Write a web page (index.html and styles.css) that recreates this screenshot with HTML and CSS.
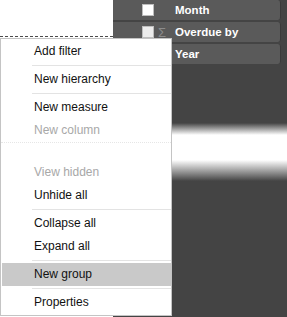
FILE: index.html
```html
<!DOCTYPE html>
<html lang="en">
<head>
    <meta charset="UTF-8">
    <title>Fields context menu</title>
    <link rel="stylesheet" href="styles.css">
</head>
<body>
    <div class="screen">
        <div class="corner"></div>
        <div class="panel">
            <div class="field"><span class="check"></span><span class="sigma"></span><span class="name">Month</span></div>
            <div class="field"><span class="check dim"></span><span class="sigma">&Sigma;</span><span class="name">Overdue by</span></div>
            <div class="field"><span class="check"></span><span class="sigma"></span><span class="name">Year</span></div>
        </div>
    </div>

    <!-- context menu over the fields list -->
    <ul class="menu">
        <li class="item">Add filter</li>
        <li class="sep"></li>
        <li class="item">New hierarchy</li>
        <li class="sep"></li>
        <li class="item">New measure</li>
        <li class="item disabled">New column</li>
        <li class="cut"></li>
        <li class="item disabled">View hidden</li>
        <li class="item">Unhide all</li>
        <li class="sep"></li>
        <li class="item">Collapse all</li>
        <li class="item">Expand all</li>
        <li class="sep"></li>
        <li class="item active">New group</li>
        <li class="sep"></li>
        <li class="item">Properties</li>
    </ul>
</body>
</html>
```

FILE: styles.css
```css
body {
    margin: 0;
    background: #ffffff;
    font-family: "Liberation Sans", Arial, sans-serif;
    font-size: 12px;
    overflow: hidden;
}

.screen {
    display: grid;
    grid-template-columns: 113px 1fr;
    height: 317px;
}

.corner {
    height: 36px;
    background: #ffffff;
    border-bottom: 1px dashed #4a4a4a;
}

.panel {
    display: flex;
    flex-direction: column;
    gap: 2px;
    padding-right: 6px;
    background: linear-gradient(#444444 0, #444444 123px, #ffffff 135px, #ffffff 160px, #444444 181px);
}

.field {
    display: flex;
    align-items: center;
    height: 20px;
    background: #5a5a5a;
    border-right: 1px solid #3a3a3a;
    border-radius: 0 3px 3px 0;
    color: #ffffff;
}

.check {
    width: 10px;
    height: 10px;
    margin-left: 29px;
    background: #ffffff;
    border: 1px solid #bdbdbd;
}

.check.dim {
    background: #ececec;
}

.sigma {
    width: 17px;
    padding-left: 4px;
    color: #8c8c8c;
    font-size: 13px;
}

.name {
    font-weight: bold;
    font-size: 11.5px;
}

/* context menu */
.menu {
    position: absolute;
    top: 38px;
    left: 0;
    width: 170px;
    margin: 0;
    padding: 1px 0;
    list-style: none;
    background: #ffffff;
    border: 1px solid #c4c4c4;
    color: #111111;
}

.item {
    height: 23px;
    line-height: 23px;
    padding-left: 33px;
}

.item.disabled {
    color: #a8a8a8;
}

.item.active {
    margin-left: 1px;
    padding-left: 32px;
    background: #c9c9c9;
}

.sep {
    height: 1px;
    margin: 2px 0 2px 31px;
    background: #e3e3e3;
}

.cut {
    height: 18px;
    border-top: 1px dotted #e6e6e6;
}
```
